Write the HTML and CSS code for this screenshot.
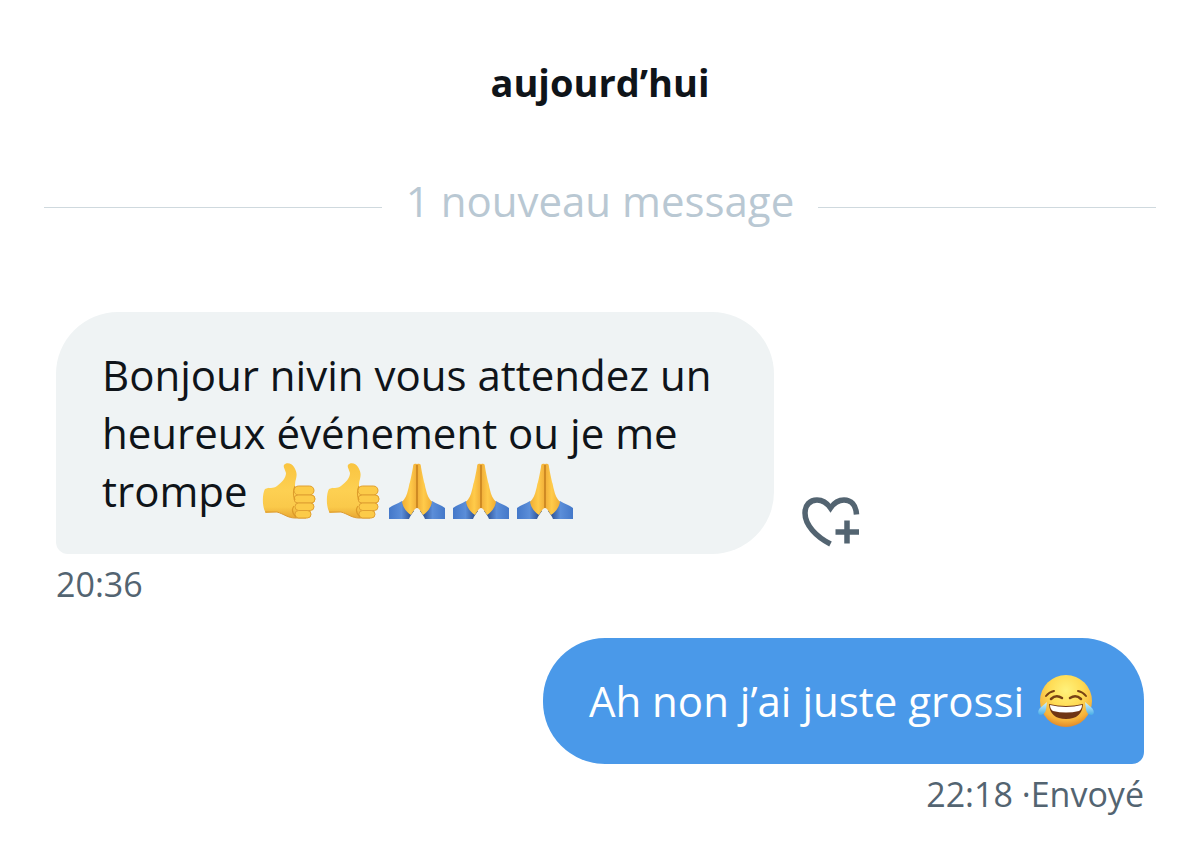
FILE: index.html
```html
<!DOCTYPE html>
<html lang="fr">
<head>
<meta charset="utf-8">
<meta name="viewport" content="width=device-width, initial-scale=1">
<title>Messages</title>
<link rel="stylesheet" href="styles.css">
</head>
<body>
<svg class="defs" aria-hidden="true">
  <defs>
    <linearGradient id="skin" x1="0" y1="0" x2="0" y2="1">
      <stop offset="0" stop-color="#f9c440"/><stop offset=".5" stop-color="#fdd052"/><stop offset=".8" stop-color="#fac94a"/><stop offset="1" stop-color="#e9a732"/>
    </linearGradient>
    <linearGradient id="palm" x1="0" y1="0" x2="1" y2="0">
      <stop offset="0" stop-color="#f0ad33"/><stop offset=".55" stop-color="#ffcb4a"/><stop offset="1" stop-color="#f0ad38"/>
    </linearGradient>
    <linearGradient id="sleeve" x1="0" y1="0" x2="1" y2="0">
      <stop offset="0" stop-color="#4478c9"/><stop offset=".5" stop-color="#5b8ed9"/><stop offset="1" stop-color="#1f3f80"/>
    </linearGradient>
    <radialGradient id="face" cx=".5" cy=".3" r=".72">
      <stop offset="0" stop-color="#fff27c"/><stop offset=".45" stop-color="#ffdc55"/><stop offset=".8" stop-color="#f6b33c"/><stop offset="1" stop-color="#df8325"/>
    </radialGradient>
    <linearGradient id="tear" x1="0" y1="0" x2="0" y2="1">
      <stop offset="0" stop-color="#d5f4fc"/><stop offset="1" stop-color="#49aee8"/>
    </linearGradient>
    <symbol id="thumb" viewBox="0 0 56 56">
      <path d="M4 26C8 24 12 26 16 23C21 19 25 15 25 10C24 6 22 4 23 2C25 -1 31 0 33 4C36 9 36 12 35 16C34 19 34 21 34 24L49 23C54 24 54 30 51 32C56 33 55 39 51 40C54 42 53 47 49 47C51 50 49 55 44 55L34 55C27 55 23 51 16 49L5 50C1 45 1 31 4 26Z" fill="url(#skin)"/>
      <path d="M4 49L16 49C23 51 27 55 34 55L45 55" fill="none" stroke="#dc9a30" stroke-width="1"/>
      <g fill="#fccb49" stroke="#e0a032" stroke-width="1">
        <rect x="33" y="23" width="20" height="9" rx="4.500"/>
        <rect x="33" y="32" width="21" height="8" rx="4"/>
        <rect x="34" y="40" width="19" height="7.500" rx="3.700"/>
        <rect x="34" y="47.500" width="16" height="7.500" rx="3.700"/>
      </g>
      <path d="M34 23C32 27 32 33 34 37M33 43C30 47 32 51 35 54" fill="none" stroke="#dc9a28" stroke-width="1.200"/>
    </symbol>
    <symbol id="arm" viewBox="0 0 28 56">
      <path d="M0 45C4 42 8 41 13 38L25 48C23 51 21 53 20 56H0Z" fill="url(#sleeve)"/>
      <path d="M28 1C25 0 24 1 24 4C23 10 22 14 21 19C20 21 20 24 19 27C18 32 16 36 13 39C14 44 17 49 22 52C25 48 25 46 28 45Z" fill="url(#palm)"/>
    </symbol>
    <symbol id="pray" viewBox="0 0 56 56">
      <use href="#arm" width="28" height="56"/>
      <use href="#arm" width="28" height="56" transform="matrix(-1 0 0 1 56 0)"/>
      <path d="M28 2V45" stroke="#b97216" stroke-width="1.200"/>
    </symbol>
    <symbol id="joy" viewBox="0 0 56 56">
      <circle cx="28" cy="28" r="26" fill="url(#face)"/>
      <g fill="none" stroke="#784215" stroke-width="2" stroke-linecap="round">
        <path d="M8 23Q11 19 16 18M48 23Q45 19 40 18"/>
        <path d="M13 26Q18 21 24 25M32 25Q38 21 43 26" stroke-width="2.500"/>
      </g>
      <path d="M11 31Q28 35 45 31Q44 46 28 46Q12 46 11 31Z" fill="#6f3514"/>
      <path d="M12 32Q28 36 44 32Q44 36 41 38Q28 41 15 38Q12 36 12 32Z" fill="#fff"/>
      <path d="M9 29C8 34 9 41 3 42C-1 42 0 37 2 35Z" fill="url(#tear)"/>
      <path d="M47 29C48 34 47 41 53 42C57 42 56 37 54 35Z" fill="url(#tear)"/>
    </symbol>
  </defs>
</svg>
<main class="chat">
  <h1 class="day">aujourd’hui</h1>
  <div class="divider"><span>1 nouveau message</span></div>
  <section class="message received">
    <div class="row">
      <p class="bubble">Bonjour nivin vous attendez un heureux événement ou je me trompe <span class="emojis"><svg class="emoji" role="img" aria-label="Pouce levé"><use href="#thumb"/></svg><svg class="emoji" role="img" aria-label="Pouce levé"><use href="#thumb"/></svg><svg class="emoji" role="img" aria-label="Mains jointes"><use href="#pray"/></svg><svg class="emoji" role="img" aria-label="Mains jointes"><use href="#pray"/></svg><svg class="emoji" role="img" aria-label="Mains jointes"><use href="#pray"/></svg></span></p>
      <button class="react" type="button" aria-label="Ajouter une réaction">
        <svg viewBox="0 0 60 52" fill="none" stroke="#536471" stroke-width="5.500">
          <path d="M28.500 48C14 40.500 3 29 3 17C3 9 8 4 15 4C21 4 25 7 28.500 12C32 7 36 4 42 4C49 4 54 9 54.500 18.500"/>
          <path d="M45 24.500V47.500M33.500 36H57"/>
        </svg>
      </button>
    </div>
    <time class="meta">20:36</time>
  </section>
  <section class="message sent">
    <p class="bubble">Ah non j’ai juste grossi <span class="emojis"><svg class="emoji" role="img" aria-label="Larmes de joie"><use href="#joy"/></svg></span></p>
    <div class="meta"><time>22:18</time> <span>·</span><span>Envoyé</span></div>
  </section>
</main>
</body>
</html>
```
FILE: styles.css
```css
* { box-sizing: border-box; }
body {
  margin: 0;
  background: #fff;
  color: #0f1419;
  font-family: "Open Sans", sans-serif;
}
.defs { position: absolute; width: 0; height: 0; }
.chat {
  display: flex;
  flex-direction: column;
  padding: 54px 44px 32px;
}
.day {
  margin: 0;
  font-size: 38px;
  line-height: 56px;
  font-weight: 700;
  text-align: center;
}
.divider {
  display: flex;
  align-items: center;
  gap: 24px;
  margin: 59px 0 79px;
  color: #b9c8d3;
  font-size: 42px;
  line-height: 64px;
}
.divider::before,
.divider::after {
  content: "";
  flex: 1;
  height: 1px;
  margin-top: 12px;
  background: #cfd9de;
}
.message {
  display: flex;
  flex-direction: column;
  margin: 0 12px;
}
.received { align-items: flex-start; }
.sent { align-items: flex-end; margin-top: 32px; }
.row { display: flex; align-items: flex-end; gap: 28px; }
.bubble {
  margin: 0;
  padding: 34px 46px;
  border-radius: 62px;
  font-size: 42px;
  line-height: 58px;
}
.received .bubble {
  max-width: 718px;
  background: #eff3f4;
  border-bottom-left-radius: 12px;
}
.sent .bubble {
  padding-right: 50px;
  background: #4a99e9;
  color: #fff;
  border-bottom-right-radius: 12px;
}
.emojis {
  display: inline-flex;
  gap: 8px;
  margin: -8px 0 -8px 3px;
  vertical-align: -12px;
}
.emoji {
  width: 56px;
  height: 56px;
}
.react {
  display: flex;
  margin-bottom: 6px;
  padding: 0;
  border: 0;
  background: none;
  cursor: pointer;
}
.react svg { width: 60px; height: 52px; }
.meta {
  margin-top: 8px;
  color: #536471;
  font-size: 34px;
  line-height: 44px;
}
```
